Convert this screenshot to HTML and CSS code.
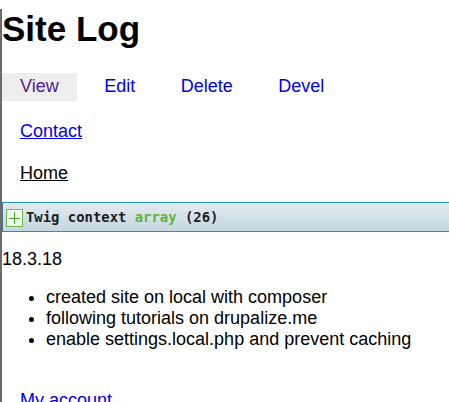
FILE: index.html
```html
<!DOCTYPE html>
<html>
<head>
<meta charset="utf-8">
<link rel="stylesheet" href="styles.css">
</head>
<body>
<div class="page">
  <h1 class="title">Site Log</h1>
  <ul class="tabs">
    <li><a class="tab active" href="#">View</a></li>
    <li><a class="tab" href="#">Edit</a></li>
    <li><a class="tab" href="#">Delete</a></li>
    <li><a class="tab" href="#">Devel</a></li>
  </ul>
  <div class="menu">
    <a class="link" href="#">Contact</a>
  </div>
  <div class="menu menu-home">
    <a class="link home" href="#">Home</a>
  </div>
  <div class="kint"><span class="plus"></span><span class="ktext">Twig context <span class="ktype">array</span> (26)</span></div>
  <p class="date">18.3.18</p>
  <ul class="notes">
    <li>created site on local with composer</li>
    <li>following tutorials on drupalize.me</li>
    <li>enable settings.local.php and prevent caching</li>
  </ul>
  <div class="menu menu-account">
    <a class="link" href="#">My account</a>
  </div>
</div>
</body>
</html>
```

FILE: styles.css
```css
html, body {
  margin: 0;
  padding: 0;
  background: #fff;
}
body {
  font-family: "Liberation Sans", Arial, sans-serif;
  font-size: 18px;
  line-height: 21px;
  color: #000;
}
.page {
  border-left: 2px solid #6b6b6b;
  min-height: 402px;
  box-sizing: border-box;
}
.title {
  margin: 9px 0 0;
  font-size: 35px;
  line-height: 40px;
  font-weight: bold;
}
.tabs {
  list-style: none;
  margin: 24px 0 0;
  padding: 0;
  display: flex;
  gap: 9.5px;
}
.tab {
  display: block;
  padding: 3px 18px 4px;
  color: #0000ee;
  text-decoration: none;
}
.tab.active {
  background: #eeeeee;
  color: #551a8b;
}
.menu {
  margin-top: 20px;
  padding-left: 18px;
}
.menu-home {
  margin-top: 21px;
}
.menu-account {
  margin-top: 40px;
}
.link {
  color: #0000ee;
  text-decoration: underline;
}
.link.home {
  color: #000;
}
.kint {
  margin-top: 18px;
  height: 28px;
  border-top: 1px solid #1f90d4;
  border-bottom: 1px solid #1f90d4;
  border-left: 1px solid #4f6f8c;
  background: linear-gradient(to bottom, #e2ebf0 0%, #c4d6e0 100%);
  display: flex;
  align-items: center;
  font-family: "DejaVu Sans Mono", monospace;
  font-weight: bold;
  font-size: 13.9px;
  color: #1d1e1e;
}
.ktext {
  white-space: pre;
  line-height: 16px;
}
.plus {
  position: relative;
  width: 15px;
  height: 16px;
  border: 1px solid #6cc04a;
  background: #f4f8f2;
  margin: 2px 3px 0 3px;
  flex: none;
}
.plus::before, .plus::after {
  content: "";
  position: absolute;
  background: #4aa82a;
}
.plus::before {
  left: 2px;
  right: 2px;
  top: 8px;
  height: 1px;
}
.plus::after {
  top: 2px;
  bottom: 2px;
  left: 7px;
  width: 1px;
}
.ktype {
  color: #5eb33a;
}
.date {
  margin: 17px 0 0;
}
.notes {
  margin: 17px 0 0;
  padding-left: 44px;
}
```
